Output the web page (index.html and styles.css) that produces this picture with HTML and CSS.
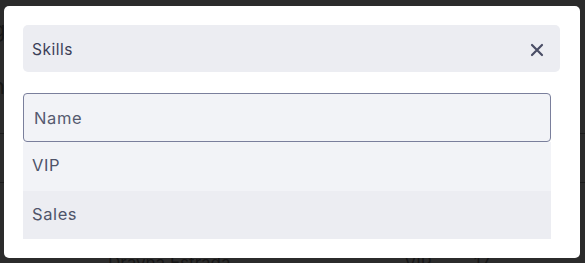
FILE: index.html
```html
<!DOCTYPE html>
<html>
<head>
  <title>Skills</title>
  <link rel="stylesheet" href="styles.css">
</head>
<body>

<div class="backdrop">
  <div class="bg-row bg-head"><span class="bg-cell">g</span></div>
  <div class="bg-row bg-mid"><span class="bg-cell">n</span></div>
  <div class="bg-row bg-short"></div>
  <div class="bg-row bg-tall"></div>
  <div class="bg-row bg-last">
    <span class="bg-name">Drayna Estrada</span>
    <span class="bg-skill">VIP</span>
    <span class="bg-num">17</span>
  </div>
</div>

<div class="modal">
  <div class="modal-header">
    <span class="modal-title">Skills</span>
    <button class="close-btn" aria-label="Close">
      <svg width="14" height="14" viewBox="0 0 14 14">
        <path d="M2 2 L12 12 M12 2 L2 12" stroke="#4a4e66" stroke-width="2.2" stroke-linecap="round" fill="none"/>
      </svg>
    </button>
  </div>

  <div class="select">
    <input type="text" class="select-input" placeholder="Name">
    <div class="option">VIP</div>
    <div class="option option-active">Sales</div>
  </div>
</div>

</body>
</html>
```

FILE: styles.css
```css
body {
  margin: 0;
  padding: 0;
  background-color: #2b2b2b;
  font-family: 'Inter', 'Liberation Sans', sans-serif;
  overflow: hidden;
  height: 263px;
}

/* page behind the dialog */
.backdrop {
  color: #161616;
  font-size: 15px;
}

.bg-row {
  border-bottom: 1px solid #1b1b1b;
  box-sizing: border-box;
  position: relative;
}

.bg-head {
  height: 68px;
  border-bottom-color: transparent;
  padding: 16px 0 0 0;
}

.bg-mid {
  height: 66px;
  padding-top: 5px;
}

.bg-short {
  height: 49px;
}

.bg-tall {
  height: 70px;
  border-bottom: none;
}

.bg-cell {
  font-size: 22px;
  margin-left: -8px;
}

.bg-last {
  display: flex;
  border-bottom: none;
  padding-top: 0;
  font-size: 17px;
}

.bg-name {
  margin-left: 108px;
}

.bg-skill {
  margin-left: 174px;
}

.bg-num {
  margin-left: 42px;
}

/* dialog */
.modal {
  position: fixed;
  top: 6px;
  left: 4px;
  width: 576px;
  height: 252px;
  background-color: #fff;
  border-radius: 5px;
  padding: 19px 20px 19px 19px;
  box-sizing: border-box;
}

.modal-header {
  display: flex;
  justify-content: space-between;
  align-items: center;
  height: 47px;
  box-sizing: border-box;
  background-color: #ecedf2;
  border-radius: 5px;
  padding: 2px 16px 0 9px;
}

.modal-title {
  font-size: 15.5px;
  font-weight: 400;
  letter-spacing: 0.5px;
  color: #3b3f58;
}

.close-btn {
  background: none;
  border: none;
  padding: 0;
  cursor: pointer;
  display: flex;
}

.select {
  margin-top: 21px;
  width: 528px;
}

.select-input {
  display: block;
  width: 100%;
  height: 49px;
  box-sizing: border-box;
  border: 1px solid #7a7f9c;
  border-radius: 4px;
  background-color: #f2f3f7;
  padding: 0 10px;
  font-family: inherit;
  font-size: 16.5px;
  letter-spacing: 0.6px;
  color: #4f5469;
  outline: none;
}

.select-input::placeholder {
  color: #555a6f;
}

.option {
  height: 49px;
  line-height: 47px;
  padding-left: 9px;
  font-size: 16.5px;
  letter-spacing: 0.6px;
  color: #4f5469;
  background-color: #f2f3f7;
}

.option-active {
  height: 48px;
  background-color: #ecedf2;
}
```
